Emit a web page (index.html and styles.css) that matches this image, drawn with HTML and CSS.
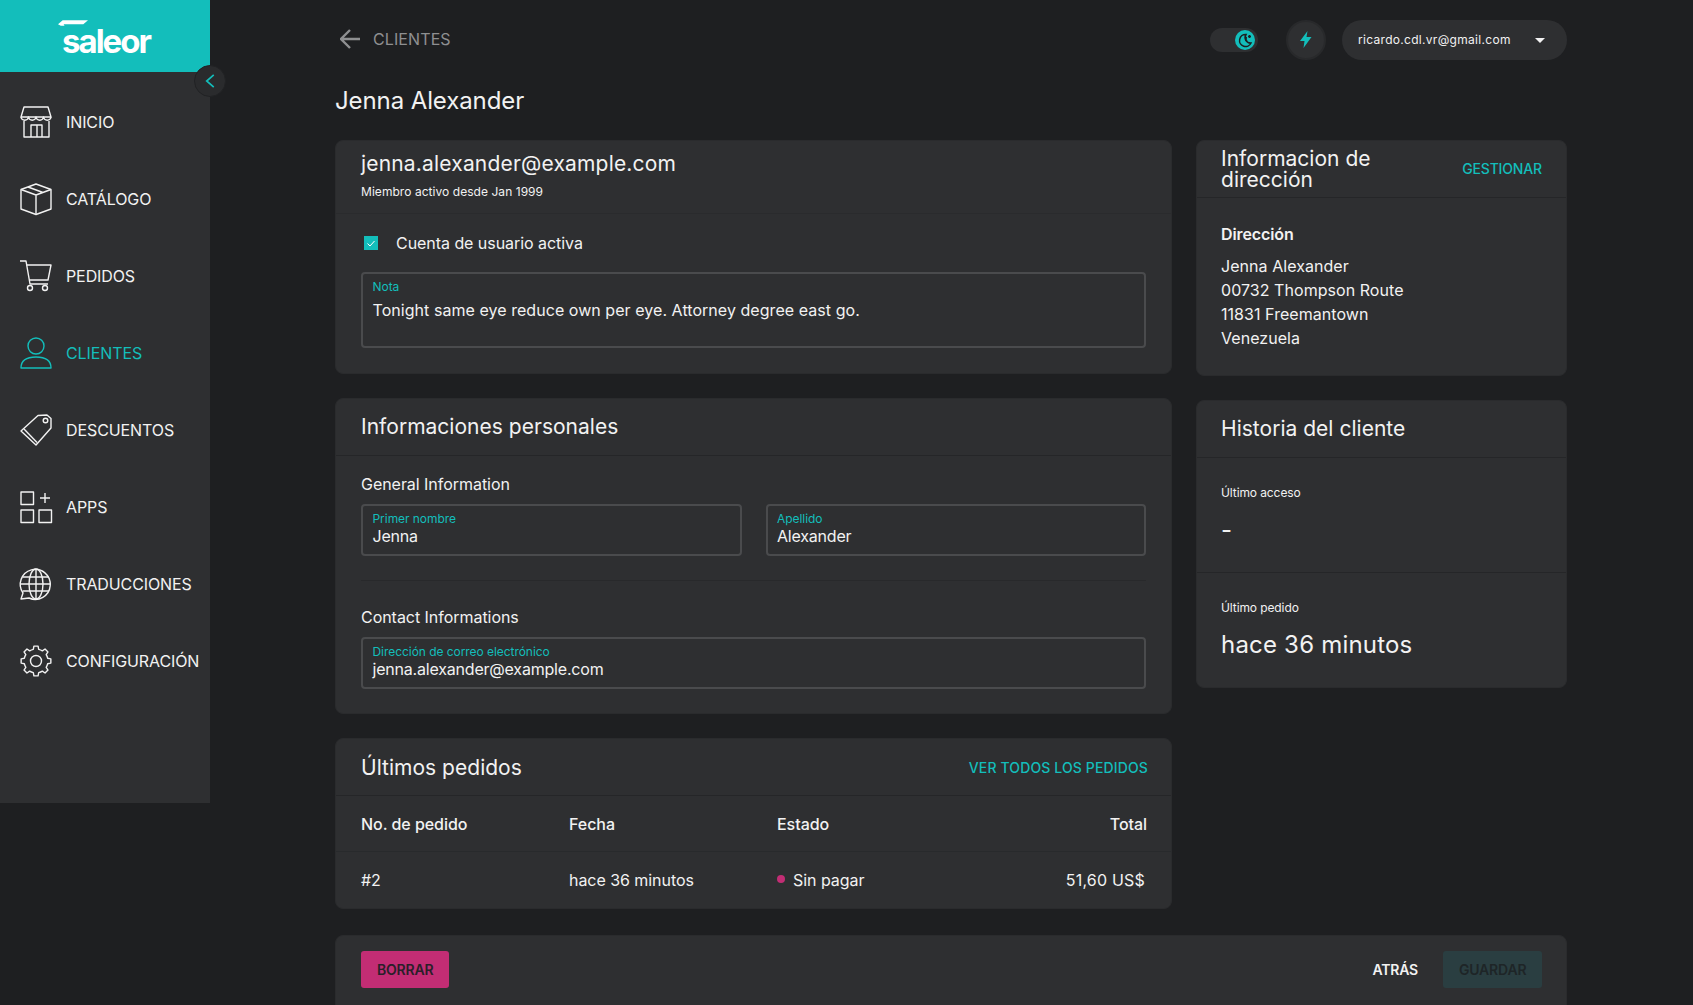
FILE: index.html
```html
<!DOCTYPE html>
<html lang="es">
<head>
    <meta charset="UTF-8">
    <title>Jenna Alexander - Clientes</title>
    <link rel="stylesheet" href="styles.css">
</head>
<body>
    <!-- Menu lateral -->
    <aside class="sidebar">
        <div class="logo">
            <svg class="logo-bar" viewBox="0 0 32 6"><polygon points="5,0 32,0 27,4.400 6,4.400 7,6 3,6 0,4.400"/></svg>
            <span class="logo-text">saleor</span>
        </div>
        <button class="collapse">
            <svg viewBox="0 0 32 32"><path d="M20 9.500 12.500 16l7.500 6.500"/></svg>
        </button>
        <nav class="menu">
            <a class="menu-item">
                <svg class="menu-icon" viewBox="0 0 32 32"><path d="M4 1h24l3 10H1z"/><path d="M1 11a3.800 3.800 0 0 0 7.500 0 3.800 3.800 0 0 0 7.500 0 3.800 3.800 0 0 0 7.500 0 3.800 3.800 0 0 0 7.500 0"/><path d="M4 15v16h25V15M11 31V19h11v12M17 19v12"/></svg>
                INICIO
            </a>
            <a class="menu-item">
                <svg class="menu-icon" viewBox="0 0 32 32"><path d="M16 1 31 6.500V26l-15 5.500L1 26V6.500z"/><path d="m1 6.500 15 5.500 15-5.500M16 12v19.500M8 4l15 5.500"/></svg>
                CATÁLOGO
            </a>
            <a class="menu-item">
                <svg class="menu-icon" viewBox="0 0 32 32"><path d="M0 1h6l4 23h18"/><path d="M6.500 5H31l-3 15H9.500"/><circle cx="10" cy="28" r="2.500"/><circle cx="25" cy="28" r="2.500"/></svg>
                PEDIDOS
            </a>
            <a class="menu-item active">
                <svg class="menu-icon" viewBox="0 0 32 32"><circle cx="16" cy="9" r="8"/><path d="M1 31c0-8 6-11 15-11s15 3 15 11z"/></svg>
                CLIENTES
            </a>
            <a class="menu-item">
                <svg class="menu-icon" viewBox="0 0 32 32"><path d="M1 17 18 1.500 27 1l4 3.500V14L16 31z"/><path d="m4 15 13 13.500"/><circle cx="25.500" cy="6.500" r="2.300"/></svg>
                DESCUENTOS
            </a>
            <a class="menu-item">
                <svg class="menu-icon" viewBox="0 0 32 32"><rect x="1" y="1" width="12.500" height="12.500"/><rect x="1" y="19" width="12.500" height="12.500"/><rect x="19" y="19" width="12.500" height="12.500"/><path d="M25 2v10M20 7h10"/></svg>
                APPS
            </a>
            <a class="menu-item">
                <svg class="menu-icon" viewBox="0 0 32 32"><path d="M9 30 1 31l2-6a15 15 0 1 1 6 5z"/><ellipse cx="16" cy="16" rx="7" ry="15"/><path d="M16 1v30M3 9h26M1 16h30M3 23h26"/></svg>
                TRADUCCIONES
            </a>
            <a class="menu-item">
                <svg class="menu-icon" viewBox="0 0 32 32"><path d="M27.690 13.300 30.850 13.910V18.090L27.690 18.700A12 12 0 0 1 26.180 22.360L27.980 25.030 25.030 27.980 22.360 26.180A12 12 0 0 1 18.700 27.690L18.090 30.850H13.910L13.300 27.690A12 12 0 0 1 9.640 26.180L6.970 27.980 4.020 25.030 5.820 22.360A12 12 0 0 1 4.310 18.700L1.150 18.090V13.910L4.310 13.300A12 12 0 0 1 5.820 9.640L4.020 6.970 6.970 4.020 9.640 5.820A12 12 0 0 1 13.300 4.310L13.910 1.150H18.090L18.700 4.310A12 12 0 0 1 22.360 5.820L25.030 4.020 27.980 6.970 26.180 9.640A12 12 0 0 1 27.690 13.300z"/><circle cx="16" cy="16" r="5.500"/></svg>
                CONFIGURACIÓN
            </a>
        </nav>
    </aside>

    <main class="main">
        <!-- Barra superior -->
        <header class="topbar">
            <a class="back">
                <svg class="back-arrow" viewBox="0 0 20 20"><path d="M20 10H2M10 1l-9 9 9 9"/></svg>
                CLIENTES
            </a>
            <div class="top-actions">
                <div class="toggle">
                    <span class="toggle-thumb">
                        <svg viewBox="0 0 20 20"><path d="M11 4.500a6 6 0 1 0 5 8.500 5.500 5.500 0 0 1-5-8.500z"/><path d="M11.500 7a3.500 3.500 0 0 0 .5 4.500M14.500 5v3M13 6.500h3"/></svg>
                    </span>
                </div>
                <button class="round-btn">
                    <svg viewBox="0 0 12 17"><polygon points="7.500,0 0,10 4.500,10 3.500,17 11.500,6 6.500,6"/></svg>
                </button>
                <div class="user-menu">
                    <span class="user-name">ricardo.cdl.vr@gmail.com</span>
                    <span class="caret"></span>
                </div>
            </div>
        </header>

        <h1 class="page-title">Jenna Alexander</h1>

        <div class="columns">
            <div class="col-left">
                <section class="card card-user">
                    <div class="user-head">
                        <div class="user-email">jenna.alexander@example.com</div>
                        <div class="user-since">Miembro activo desde Jan 1999</div>
                    </div>
                    <div class="user-body">
                        <label class="check">
                            <span class="check-box">
                                <svg viewBox="0 0 14 14"><path d="m3.500 7.500 2.500 2.500 4.500-5"/></svg>
                            </span>
                            Cuenta de usuario activa
                        </label>
                        <div class="field field-note">
                            <div class="field-label">Nota</div>
                            <div class="field-value note-value">Tonight same eye reduce own per eye. Attorney degree east go.</div>
                        </div>
                    </div>
                </section>

                <section class="card card-personal">
                    <div class="card-head"><h2>Informaciones personales</h2></div>
                    <div class="personal-body">
                        <h3 class="sub-title">General Information</h3>
                        <div class="field-row">
                            <div class="field">
                                <div class="field-label">Primer nombre</div>
                                <div class="field-value">Jenna</div>
                            </div>
                            <div class="field">
                                <div class="field-label">Apellido</div>
                                <div class="field-value">Alexander</div>
                            </div>
                        </div>
                        <hr class="rule">
                        <h3 class="sub-title">Contact Informations</h3>
                        <div class="field">
                            <div class="field-label">Dirección de correo electrónico</div>
                            <div class="field-value">jenna.alexander@example.com</div>
                        </div>
                    </div>
                </section>

                <section class="card card-orders">
                    <div class="card-head">
                        <h2>Últimos pedidos</h2>
                        <a class="link">VER TODOS LOS PEDIDOS</a>
                    </div>
                    <div class="order-row order-header">
                        <span>No. de pedido</span>
                        <span>Fecha</span>
                        <span>Estado</span>
                        <span class="order-total">Total</span>
                    </div>
                    <div class="order-row">
                        <span>#2</span>
                        <span>hace 36 minutos</span>
                        <span class="status"><i class="dot"></i>Sin pagar</span>
                        <span class="order-total order-price">51,60 US$</span>
                    </div>
                </section>
            </div>

            <div class="col-right">
                <section class="card card-address">
                    <div class="card-head">
                        <h2 class="address-title">Informacion de dirección</h2>
                        <a class="link link-manage">GESTIONAR</a>
                    </div>
                    <div class="address-body">
                        <div class="address-label">Dirección</div>
                        <p class="address-lines">Jenna Alexander<br>00732 Thompson Route<br>11831 Freemantown<br>Venezuela</p>
                    </div>
                </section>

                <section class="card card-history">
                    <div class="card-head"><h2>Historia del cliente</h2></div>
                    <div class="history-block history-first">
                        <div class="history-label">Último acceso</div>
                        <div class="history-value">-</div>
                    </div>
                    <div class="history-block">
                        <div class="history-label">Último pedido</div>
                        <div class="history-value">hace 36 minutos</div>
                    </div>
                </section>
            </div>
        </div>

        <!-- Barra de acciones -->
        <footer class="card savebar">
            <button class="btn btn-delete">BORRAR</button>
            <div class="savebar-right">
                <button class="btn btn-back">ATRÁS</button>
                <button class="btn btn-save">GUARDAR</button>
            </div>
        </footer>
    </main>
</body>
</html>
```

FILE: styles.css
```css
* {
    box-sizing: border-box;
}

html,
body {
    height: 100%;
    margin: 0;
    overflow: hidden;
}

body {
    display: flex;
    align-items: flex-start;
    background-color: #1e1f21;
    color: #f2f2f2;
    font-family: "Inter", "Liberation Sans", sans-serif;
    font-size: 16px;
}

button {
    font-family: inherit;
    border: none;
    cursor: pointer;
}

/* Menu lateral */
.sidebar {
    position: relative;
    flex: none;
    width: 210px;
    height: 803px;
    background-color: #2e2f31;
}

.logo {
    position: relative;
    display: flex;
    justify-content: center;
    height: 72px;
    background-color: #13bebb;
}

.logo-text {
    margin-top: 21px;
    margin-left: 2px;
    color: #fff;
    font-size: 33px;
    line-height: 40px;
    font-weight: 700;
    letter-spacing: -2px;
}

.logo-bar {
    position: absolute;
    top: 20px;
    left: 58px;
    width: 30px;
    height: 6px;
    fill: #fff;
}

.collapse {
    position: absolute;
    top: 65px;
    left: 194px;
    width: 32px;
    height: 32px;
    padding: 0;
    border-radius: 50%;
    background-color: #2a2b2d;
    border: 1px solid #212224;
}

.collapse svg {
    display: block;
    width: 30px;
    height: 30px;
    fill: none;
    stroke: #13bebb;
    stroke-width: 1.800;
}

.menu {
    padding-top: 11px;
}

.menu-item {
    display: flex;
    align-items: center;
    gap: 14px;
    height: 77px;
    padding-left: 20px;
    color: #f2f2f2;
    font-size: 16px;
    letter-spacing: -0.1px;
    white-space: nowrap;
}

.menu-icon {
    flex: none;
    width: 32px;
    height: 32px;
    fill: none;
    stroke: #f2f2f2;
    stroke-width: 1.400;
    stroke-linejoin: round;
    overflow: visible;
}

.menu-item.active {
    color: #13bebb;
}

.menu-item.active .menu-icon {
    stroke: #13bebb;
}

/* Contenido */
.main {
    flex: none;
    width: 1231px;
    margin-left: 126px;
}

.topbar {
    display: flex;
    justify-content: space-between;
    align-items: center;
    height: 40px;
    margin-top: 20px;
}

.back {
    display: flex;
    align-items: center;
    gap: 13px;
    margin-top: -2px;
    padding-left: 4px;
    color: #8e8f91;
    font-size: 16px;
    letter-spacing: 0.1px;
}

.back-arrow {
    width: 20px;
    height: 20px;
    fill: none;
    stroke: #8e8f91;
    stroke-width: 2.400;
}

.top-actions {
    display: flex;
    align-items: center;
}

.toggle {
    display: flex;
    justify-content: flex-end;
    align-items: center;
    width: 48px;
    height: 24px;
    padding-right: 3px;
    margin-right: 28px;
    border-radius: 12px;
    background-color: #2e2f31;
}

.toggle-thumb {
    width: 20px;
    height: 20px;
    border-radius: 50%;
    background-color: #13bebb;
}

.toggle-thumb svg {
    display: block;
    width: 20px;
    height: 20px;
    fill: none;
    stroke: #1e1f21;
    stroke-width: 1.500;
}

.round-btn {
    display: flex;
    justify-content: center;
    align-items: center;
    width: 40px;
    height: 40px;
    margin-right: 16px;
    padding: 0;
    border-radius: 50%;
    background-color: #2e2f31;
    border: 2px solid #28292b;
}

.round-btn svg {
    width: 12px;
    height: 17px;
    margin-top: -1px;
    fill: #13bebb;
}

.user-menu {
    display: flex;
    justify-content: space-between;
    align-items: center;
    width: 225px;
    height: 40px;
    padding: 0 22px 0 16px;
    border-radius: 20px;
    background-color: #2e2f31;
    color: #f2f2f2;
    font-size: 12px;
    letter-spacing: 0.3px;
}

.user-name {
    margin-top: -2px;
}

.caret {
    width: 0;
    height: 0;
    border-left: 5px solid transparent;
    border-right: 5px solid transparent;
    border-top: 5px solid #f2f2f2;
}

.page-title {
    height: 36px;
    margin: 23px 0 21px -1px;
    font-size: 24px;
    line-height: 36px;
    font-weight: 400;
    letter-spacing: -0.1px;
}

.columns {
    display: flex;
    gap: 24px;
    margin-left: -1px;
}

.col-left {
    display: flex;
    flex-direction: column;
    gap: 24px;
    width: 837px;
}

.col-right {
    display: flex;
    flex-direction: column;
    gap: 24px;
    width: 371px;
}

.card {
    border: 1px solid #2a2b2d;
    border-radius: 8px;
    background-color: #2e2f31;
}

.card-head {
    display: flex;
    justify-content: space-between;
    align-items: center;
    height: 57px;
    padding: 0 24px 0 25px;
    border-bottom: 1px solid #252628;
}

.col-right .card-head {
    padding-left: 24px;
}

.card-head h2 {
    margin: 0;
    font-size: 21px;
    font-weight: 400;
    letter-spacing: 0.02px;
}

.card-personal h2,
.card-history h2 {
    margin-top: -2px;
}

.link {
    margin-right: -1px;
    color: #13bebb;
    font-size: 14px;
    font-weight: 500;
    letter-spacing: 0.13px;
    white-space: nowrap;
}

.link-manage {
    margin-top: -2px;
    margin-right: 0;
    letter-spacing: -0.15px;
}

/* Tarjeta del usuario */
.card-user {
    height: 234px;
}

.user-head {
    height: 73px;
    padding: 9px 25px 0;
    border-bottom: 1px solid #2a2b2d;
}

.user-email {
    font-size: 21px;
    line-height: 28px;
    letter-spacing: 0.18px;
}

.user-since {
    margin-top: 6px;
    font-size: 12px;
    line-height: 16px;
    letter-spacing: 0.05px;
}

.user-body {
    padding: 0 25px;
}

.check {
    display: flex;
    align-items: center;
    gap: 18px;
    height: 58px;
    padding-left: 3px;
    letter-spacing: -0.05px;
}

.check-box {
    width: 14px;
    height: 14px;
    background-color: #13bebb;
}

.check-box svg {
    display: block;
    fill: none;
    stroke: #fff;
    stroke-width: 1;
}

.field {
    height: 52px;
    padding: 5px 10px 0 9.500px;
    border: 2px solid #4a4b4d;
    border-radius: 4px;
}

.field-note {
    height: 76px;
}

.field-label {
    color: #13bebb;
    font-size: 12px;
    line-height: 15px;
    letter-spacing: -0.05px;
}

.field-value {
    font-size: 16px;
    line-height: 20px;
    letter-spacing: -0.2px;
}

.note-value {
    margin-top: 6px;
    letter-spacing: 0.05px;
}

/* Informaciones personales */
.card-personal {
    height: 316px;
}

.personal-body {
    padding: 0 25px;
}

.sub-title {
    margin: 0;
    padding-top: 17px;
    height: 48px;
    font-size: 16px;
    line-height: 22px;
    font-weight: 400;
    letter-spacing: -0.04px;
}

.field-row {
    display: grid;
    grid-template-columns: 1fr 1fr;
    gap: 24px;
}

.rule {
    height: 1px;
    margin: 24px 0 8px;
    border: none;
    background-color: #28292b;
}

/* Pedidos */
.order-row {
    display: grid;
    grid-template-columns: 208px 208px 1fr 200px;
    align-items: center;
    height: 56px;
    padding: 0 24px 0 25px;
    border-bottom: 1px solid #282a2c;
    letter-spacing: -0.05px;
}

.order-row:last-child {
    border-bottom: none;
}

.order-header {
    font-weight: 500;
}

.order-total {
    text-align: right;
}

.order-price {
    padding-right: 2px;
    letter-spacing: 0.2px;
}

.status {
    display: flex;
    align-items: center;
}

.dot {
    width: 8px;
    height: 8px;
    margin-right: 8px;
    margin-top: -2px;
    border-radius: 50%;
    background-color: #c22d74;
}

/* Columna derecha */
.card-address {
    height: 236px;
}

.address-title {
    width: 190px;
    line-height: 21.500px;
}

.address-body {
    padding: 25px 24px 0;
}

.address-label {
    font-weight: 600;
    line-height: 22px;
    letter-spacing: -0.1px;
}

.address-lines {
    margin: 9px 0 0;
    line-height: 24px;
    letter-spacing: 0.05px;
}

.card-history {
    height: 288px;
}

.history-block {
    height: 115px;
    padding: 27px 24px 0;
}

.history-first {
    border-bottom: 1px solid #252628;
}

.history-label {
    font-size: 12px;
    line-height: 16px;
    letter-spacing: -0.1px;
}

.history-value {
    margin-top: 11px;
    font-size: 24px;
    line-height: 36px;
    letter-spacing: 0.2px;
}

/* Barra de acciones */
.savebar {
    display: flex;
    justify-content: space-between;
    align-items: flex-start;
    height: 100px;
    margin: 26px 0 0 -1px;
    padding: 15px 24px 0 25px;
}

.savebar-right {
    display: flex;
    align-items: center;
    gap: 9px;
}

.btn {
    height: 37px;
    padding: 0 16px;
    border-radius: 3px;
    font-size: 14px;
    font-weight: 600;
    letter-spacing: -0.2px;
    background-color: transparent;
}

.btn-delete {
    width: 88px;
    background-color: #c22d74;
    color: #2a1f29;
}

.btn-back {
    color: #f2f2f2;
}

.btn-save {
    width: 99px;
    background-color: #2a3e41;
    color: #1e2527;
}
```
